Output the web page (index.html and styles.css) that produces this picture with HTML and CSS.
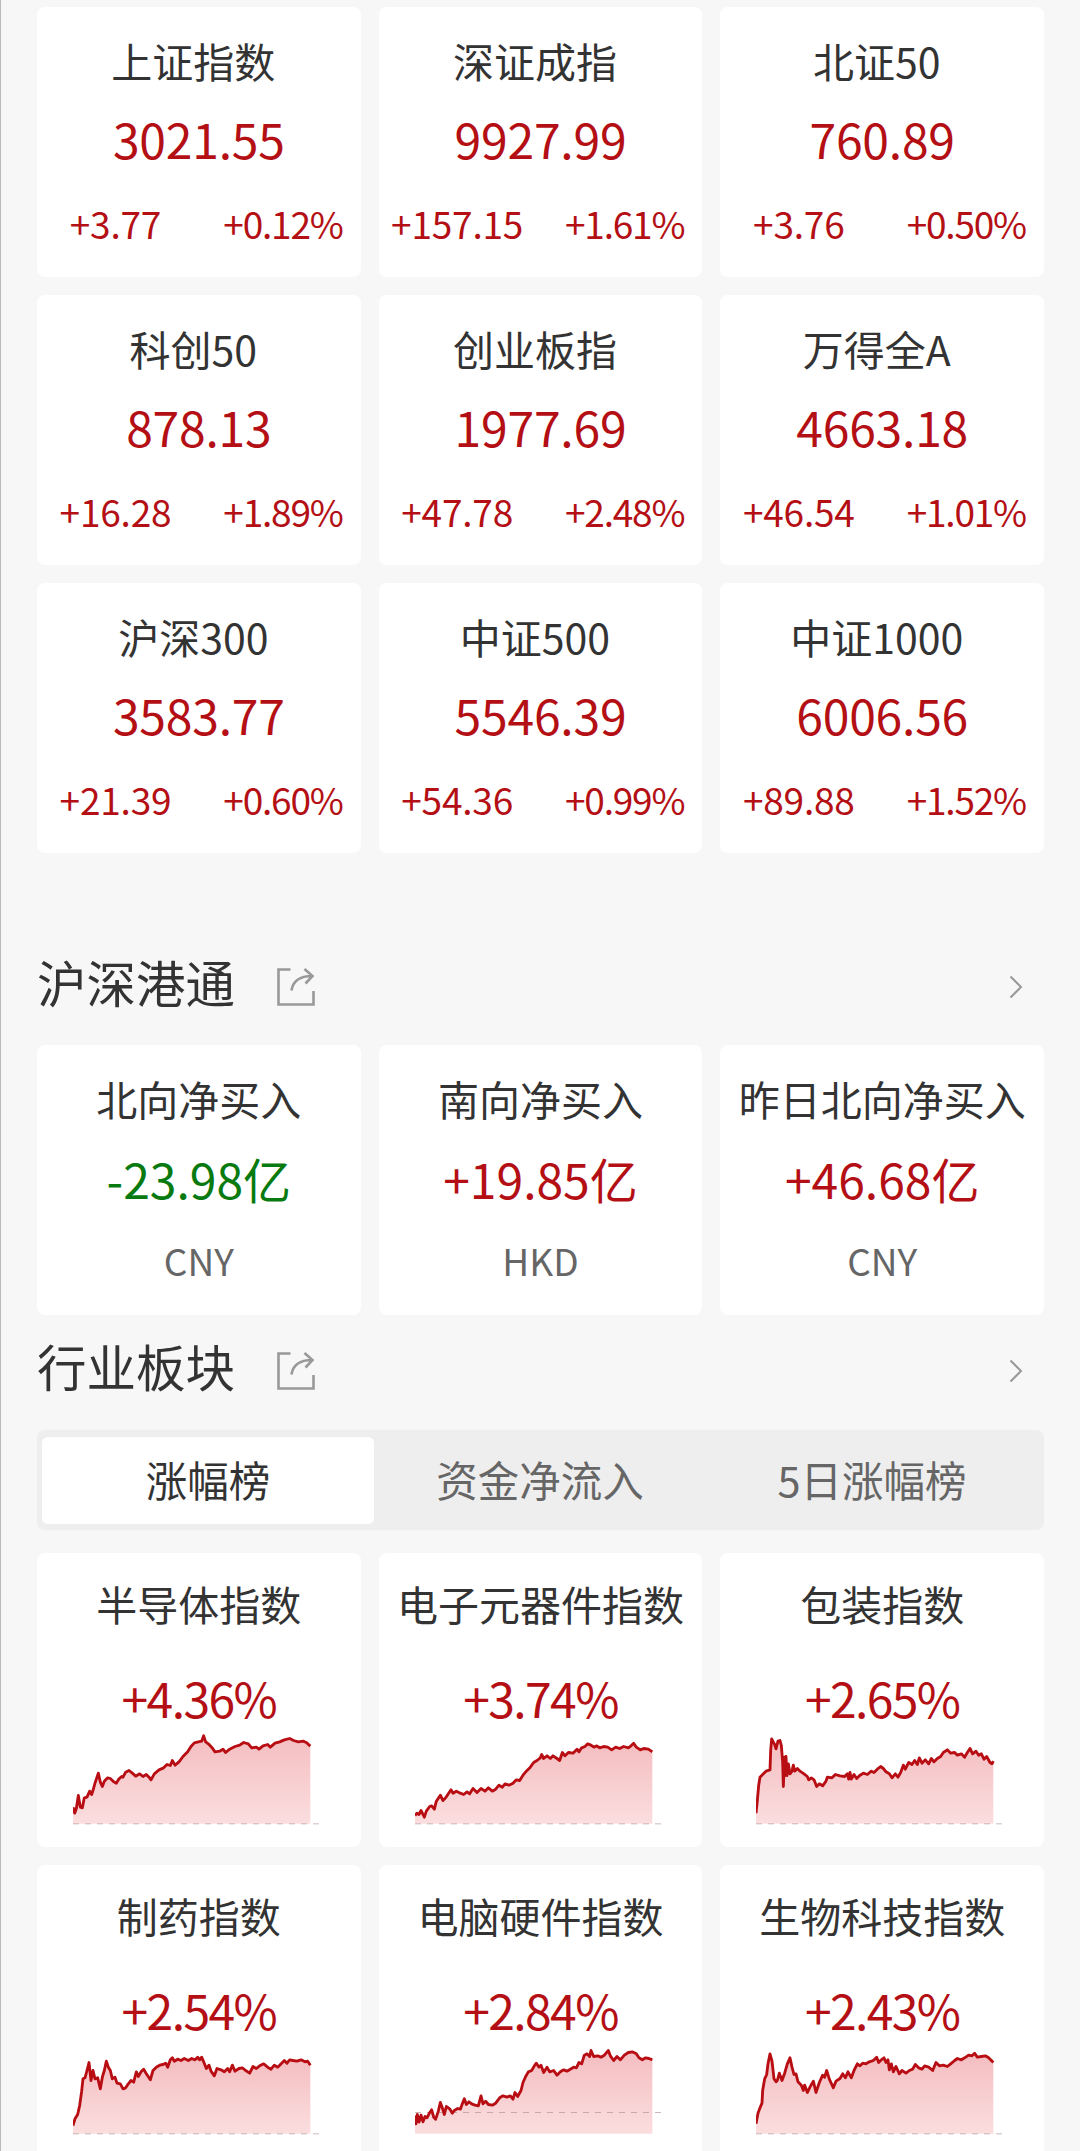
FILE: index.html
```html
<!DOCTYPE html>
<html lang="zh-CN">
<head>
    <meta charset="UTF-8">
    <meta name="viewport" content="width=device-width, initial-scale=1.0">
    <title>行情</title>
    <link rel="stylesheet" href="styles.css">
</head>
<body>
    <div class="container">
        <div class="grid indices">
            <div class="card">
                <h3>上证指数</h3>
                <p class="value">3021.55</p>
                <div class="change"><span>+3.77</span><span>+0.12%</span></div>
            </div>
            <div class="card">
                <h3>深证成指</h3>
                <p class="value">9927.99</p>
                <div class="change"><span>+157.15</span><span>+1.61%</span></div>
            </div>
            <div class="card">
                <h3>北证50</h3>
                <p class="value">760.89</p>
                <div class="change"><span>+3.76</span><span>+0.50%</span></div>
            </div>
            <div class="card">
                <h3>科创50</h3>
                <p class="value">878.13</p>
                <div class="change"><span>+16.28</span><span>+1.89%</span></div>
            </div>
            <div class="card">
                <h3>创业板指</h3>
                <p class="value">1977.69</p>
                <div class="change"><span>+47.78</span><span>+2.48%</span></div>
            </div>
            <div class="card">
                <h3>万得全A</h3>
                <p class="value">4663.18</p>
                <div class="change"><span>+46.54</span><span>+1.01%</span></div>
            </div>
            <div class="card">
                <h3>沪深300</h3>
                <p class="value">3583.77</p>
                <div class="change"><span>+21.39</span><span>+0.60%</span></div>
            </div>
            <div class="card">
                <h3>中证500</h3>
                <p class="value">5546.39</p>
                <div class="change"><span>+54.36</span><span>+0.99%</span></div>
            </div>
            <div class="card">
                <h3>中证1000</h3>
                <p class="value">6006.56</p>
                <div class="change"><span>+89.88</span><span>+1.52%</span></div>
            </div>
        </div>

        <div class="section-header connect-header">
            <h2>沪深港通</h2>
            <svg class="share" viewBox="0 0 38 38">
                <path d="M13.5 1.5H1.5V36.5H36.5V23"/>
                <path d="M14.5 22.5C16 13 23 8 35 8M27.5 1L35.5 8L28.5 15.5"/>
            </svg>
            <svg class="arrow" viewBox="0 0 14 24"><path d="M1.5 1.5L12 12L1.5 22.5"/></svg>
        </div>

        <div class="grid connect">
            <div class="card">
                <h3>北向净买入</h3>
                <p class="value down">-23.98亿</p>
                <p class="currency">CNY</p>
            </div>
            <div class="card">
                <h3>南向净买入</h3>
                <p class="value">+19.85亿</p>
                <p class="currency">HKD</p>
            </div>
            <div class="card">
                <h3>昨日北向净买入</h3>
                <p class="value">+46.68亿</p>
                <p class="currency">CNY</p>
            </div>
        </div>

        <div class="section-header sector-header">
            <h2>行业板块</h2>
            <svg class="share" viewBox="0 0 38 38">
                <path d="M13.5 1.5H1.5V36.5H36.5V23"/>
                <path d="M14.5 22.5C16 13 23 8 35 8M27.5 1L35.5 8L28.5 15.5"/>
            </svg>
            <svg class="arrow" viewBox="0 0 14 24"><path d="M1.5 1.5L12 12L1.5 22.5"/></svg>
        </div>

        <div class="tabs">
            <div class="tab active">涨幅榜</div>
            <div class="tab">资金净流入</div>
            <div class="tab">5日涨幅榜</div>
        </div>

        <div class="grid sectors">
            <div class="card">
                <h3>半导体指数</h3>
                <p class="value">+4.36%</p>
                <svg class="chart" viewBox="0 0 750 290" data-base="0" data-points="0,50 5,32 10,45 16,85 22,50 28,48 34,78 42,80 50,98 56,88 60,100 66,122 76,152 82,125 88,112 94,128 104,138 112,136 122,126 130,122 138,135 146,142 150,140 158,155 168,160 178,152 188,143 200,150 210,142 220,148 228,140 234,132 244,150 258,162 272,168 282,178 292,175 298,190 306,176 318,186 330,202 344,216 354,232 364,243 376,246 386,248 392,264 398,246 406,240 416,230 426,216 440,218 450,224 458,214 470,224 486,232 500,236 512,244 526,240 536,228 550,230 558,224 570,234 584,238 592,230 606,242 620,246 634,252 650,256 662,250 676,246 690,248 700,244 712,233"></svg>
            </div>
            <div class="card">
                <h3>电子元器件指数</h3>
                <p class="value">+3.74%</p>
                <svg class="chart" viewBox="0 0 750 290" data-base="0" data-points="0,25 6,32 12,28 18,40 28,20 34,38 44,52 50,54 58,44 64,68 76,86 84,70 92,78 100,90 108,102 114,92 124,98 136,92 146,88 156,96 164,90 174,106 186,94 198,106 210,98 220,108 232,98 242,104 252,116 262,110 270,120 282,116 294,122 304,132 314,130 324,146 334,158 346,170 356,184 366,190 376,198 380,208 386,196 396,204 406,196 414,204 426,196 434,190 442,214 450,204 460,214 474,212 486,224 492,216 500,228 510,232 518,240 528,236 538,230 544,234 554,228 566,232 578,230 590,222 602,230 614,226 626,232 640,228 648,234 656,242 664,230 676,222 686,226 700,224 712,216"></svg>
            </div>
            <div class="card">
                <h3>包装指数</h3>
                <p class="value">+2.65%</p>
                <svg class="chart" viewBox="0 0 750 290" data-base="0" data-points="0,32 4,70 8,115 12,140 20,148 30,158 42,162 44,220 47,255 52,245 56,238 60,225 66,248 72,250 76,235 80,185 82,112 86,200 88,145 90,202 93,145 97,180 102,150 108,158 112,176 116,158 124,166 132,158 144,150 154,142 158,132 166,138 174,132 182,112 190,120 200,114 210,128 214,140 228,138 238,148 252,144 266,142 274,150 278,134 282,154 286,134 294,148 302,136 312,146 322,152 334,148 346,158 354,154 364,164 374,172 382,166 390,156 400,150 408,138 418,150 426,140 434,154 442,176 448,164 458,184 468,178 476,190 484,178 490,198 498,182 508,192 518,180 526,196 534,186 544,196 554,202 562,214 574,222 584,212 596,214 604,206 616,210 626,200 634,214 642,226 650,210 660,218 668,206 676,210 684,194 692,202 702,184 708,180 712,188"></svg>
            </div>
            <div class="card">
                <h3>制药指数</h3>
                <p class="value">+2.54%</p>
                <svg class="chart" viewBox="0 0 750 290" data-base="0" data-points="0,25 6,45 14,58 20,85 26,128 30,165 36,168 42,190 48,214 54,160 60,190 66,165 74,168 82,135 88,170 94,190 100,218 106,200 112,190 118,165 126,170 132,152 142,150 150,135 158,138 166,150 174,160 182,155 190,186 196,172 204,186 212,194 220,180 232,162 240,190 250,200 260,206 270,208 278,212 284,200 292,222 298,228 304,218 314,224 324,220 334,226 346,220 356,226 366,222 374,230 380,222 386,230 392,216 400,196 408,206 414,188 424,174 432,196 444,192 454,186 464,196 470,186 478,206 486,188 498,196 508,198 518,190 530,182 540,202 550,196 560,204 572,210 584,200 594,194 604,206 614,200 626,212 634,220 642,212 650,222 660,220 672,218 684,222 696,216 704,218 712,206"></svg>
            </div>
            <div class="card">
                <h3>电脑硬件指数</h3>
                <p class="value">+2.84%</p>
                <svg class="chart" viewBox="0 0 750 290" data-base="64" data-points="0,55 3,30 7,58 12,35 18,56 24,36 30,52 36,48 42,60 50,72 56,50 62,44 70,68 76,94 82,78 88,58 94,82 104,75 112,62 118,70 128,76 136,74 142,90 148,105 154,88 162,96 170,90 180,86 190,84 198,114 204,90 212,98 220,88 232,86 242,92 254,108 264,114 276,110 286,114 294,104 300,124 308,112 318,130 324,154 332,172 340,186 350,190 358,204 364,212 372,200 378,206 386,184 396,200 404,186 416,190 426,176 436,186 446,192 456,188 466,194 476,200 484,198 492,214 500,210 508,236 516,240 524,232 528,250 536,232 548,234 558,230 568,236 580,250 586,234 596,220 606,232 616,222 628,236 640,244 652,246 664,240 672,228 682,222 692,228 702,226 712,222"></svg>
            </div>
            <div class="card">
                <h3>生物科技指数</h3>
                <p class="value">+2.43%</p>
                <svg class="chart" viewBox="0 0 750 290" data-base="0" data-points="0,30 6,62 12,78 18,92 20,130 26,165 32,178 36,210 42,240 48,218 54,165 60,156 64,160 70,182 78,160 86,182 94,210 102,228 108,200 114,178 120,180 126,156 136,146 142,130 146,146 154,124 162,140 172,158 180,124 190,154 200,176 206,170 212,190 220,164 232,138 240,158 252,166 260,180 268,168 276,186 286,168 294,190 304,210 312,204 320,212 330,210 340,216 352,220 362,230 368,214 376,222 384,228 390,214 396,222 400,192 406,210 412,186 420,202 430,180 438,190 450,182 460,190 470,194 478,208 488,198 498,194 506,204 518,200 530,190 540,214 550,204 562,206 574,202 584,210 596,220 604,226 616,222 626,228 638,236 648,234 656,242 664,230 676,232 688,234 698,228 712,214"></svg>
            </div>
        </div>
    </div>

    <script>
        // Draws area, line and dashed reference line for each sector chart
        document.querySelectorAll('.chart').forEach(function(chart, i) {
            const bottom = 281;
            const points = chart.dataset.points.split(' ').map(function(p) {
                const [x, v] = p.split(',').map(Number);
                return x + ' ' + (bottom - v);
            });
            const line = 'M' + points.join('L');
            const base = bottom - Number(chart.dataset.base);

            chart.innerHTML = `
                <defs>
                    <linearGradient id="fill${i}" x1="0" y1="0" x2="0" y2="1">
                        <stop offset="0" stop-color="#f4bdc0"/>
                        <stop offset="1" stop-color="#fbdedf"/>
                    </linearGradient>
                </defs>
                <path d="${line}V${bottom}H0Z" fill="url(#fill${i})"/>
                <path class="chart-base" d="M0 ${base}H738"/>
                <path class="chart-line" d="${line}"/>`;
        });
    </script>
</body>
</html>
```
FILE: styles.css
```css
* {
    margin: 0;
    padding: 0;
    box-sizing: border-box;
}

body {
    font-family: "Noto Sans CJK SC", sans-serif;
    background-color: #f7f7f7;
    color: #333;
    height: 2151px;
    overflow: hidden;
}

.container {
    height: 2151px;
    padding: 7px 36px 0;
    border-left: 1px solid #bbb;
    overflow: hidden;
}

.grid {
    display: grid;
    grid-template-columns: repeat(3, 1fr);
    gap: 18px;
}

.card {
    height: 270px;
    padding-top: 23px;
    background-color: #fff;
    border-radius: 8px;
    text-align: center;
    white-space: nowrap;
}

h3 {
    font-size: 41px;
    font-weight: 400;
    line-height: 60px;
}

.value {
    margin-top: 18px;
    font-size: 48px;
    line-height: 60px;
    color: #b40f14;
}

.value.down {
    color: #087a10;
}

/* Índices */
.indices h3 {
    padding-right: 11px;
}

.indices .value {
    letter-spacing: -0.2px;
}

.change {
    display: grid;
    grid-template-columns: 157px 154px;
    column-gap: 12px;
    margin-top: 30px;
    font-size: 37px;
    line-height: 50px;
    letter-spacing: -0.2px;
    color: #b40f14;
}

.change span:last-child {
    letter-spacing: -1.2px;
}

/* Cabeçalhos das seções */
.section-header {
    display: flex;
    align-items: center;
    height: 70px;
}

.connect-header {
    margin-top: 97px;
    margin-bottom: 25px;
}

.sector-header {
    margin-top: 19px;
    margin-bottom: 26px;
}

h2 {
    margin-bottom: 7px;
    font-size: 49.5px;
    font-weight: 400;
    line-height: 70px;
}

.share {
    width: 38px;
    height: 38px;
    margin: 4px 0 0 42px;
    fill: none;
    stroke: #999;
    stroke-width: 2.6;
}

.arrow {
    width: 14px;
    height: 24px;
    margin: 4px 21px 0 auto;
    fill: none;
    stroke: #999;
    stroke-width: 2;
}

.connect .value {
    margin-top: 20px;
}

.connect .currency {
    margin-top: 27px;
    font-size: 37px;
    line-height: 50px;
    color: #666;
}

/* Abas */
.tabs {
    display: grid;
    grid-template-columns: repeat(3, 1fr);
    height: 100px;
    padding: 7px 6px 6px 5px;
    background-color: #eee;
    border-radius: 8px;
}

.tab {
    font-size: 41.5px;
    line-height: 84px;
    text-align: center;
    color: #666;
}

.tab.active {
    background-color: #fff;
    border-radius: 6px;
    color: #333;
}

/* Setores */
.sectors {
    margin-top: 23px;
}

.sectors .card {
    height: 294px;
    padding-top: 20px;
}

.sectors .value {
    margin-top: 34px;
    letter-spacing: -1.6px;
}

.chart {
    display: block;
    width: 250px;
    height: 97px;
    margin: 3px 0 0 36px;
}

.sectors .card:nth-child(n+4) .chart {
    margin-top: 1px;
}

.chart-line {
    fill: none;
    stroke: #b80d12;
    stroke-width: 8.5;
    stroke-linejoin: round;
}

.chart-base {
    fill: none;
    stroke: #a88;
    stroke-opacity: 0.6;
    stroke-width: 3;
    stroke-dasharray: 18 18;
}
```
